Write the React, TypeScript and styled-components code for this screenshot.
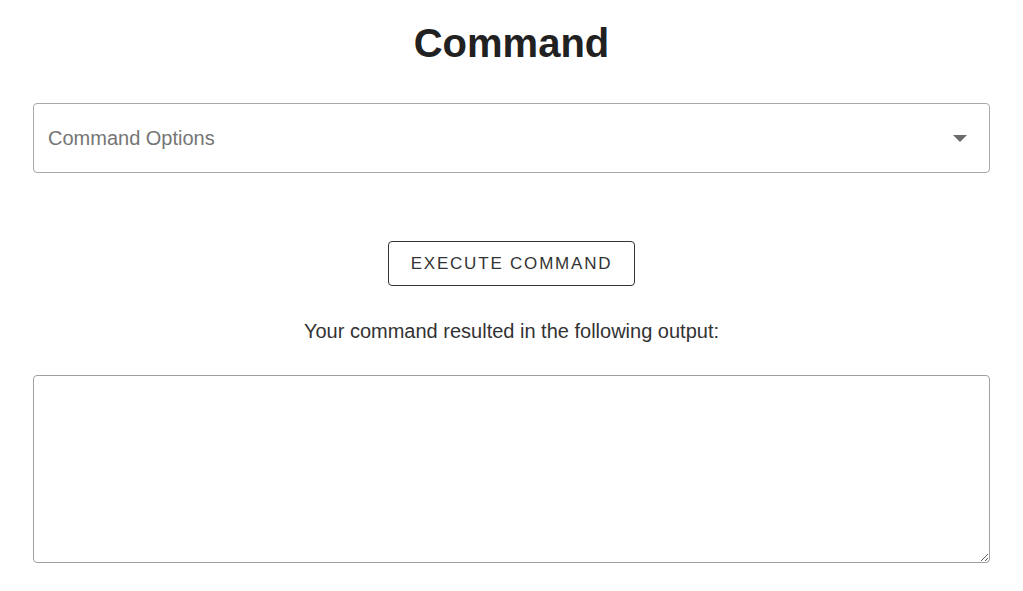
import React from "react";
import styled, { createGlobalStyle } from "styled-components";

const Global = createGlobalStyle`
  html, body { margin: 0; padding: 0; background: #fff; }
  body { font-family: "Liberation Sans", Arial, sans-serif; color: #222; }
`;

const Page = styled.main`
  display: flex;
  flex-direction: column;
  align-items: center;
  padding: 0 33px;
`;

const Title = styled.h1`
  margin: 20px 0 0;
  font-size: 40px;
  line-height: 46px;
  font-weight: 700;
  color: #212121;
`;

const SelectBox = styled.div`
  box-sizing: border-box;
  width: 100%;
  height: 70px;
  margin-top: 37px;
  border: 1px solid #a8a8a8;
  border-radius: 4px;
  display: flex;
  align-items: center;
  justify-content: space-between;
  padding: 0 22px 0 14px;
`;

const Placeholder = styled.span`
  font-size: 20px;
  color: #757575;
`;

const Caret = styled.svg`
  width: 14px;
  height: 7px;
  fill: #6b6b6b;
`;

const Button = styled.button`
  margin-top: 68px;
  box-sizing: border-box;
  width: 247px;
  height: 45px;
  background: #fff;
  border: 1px solid #333;
  border-radius: 4px;
  font-family: "Liberation Sans", Arial, sans-serif;
  font-size: 17px;
  letter-spacing: 1.8px;
  color: #333;
  text-transform: uppercase;
  cursor: pointer;
`;

const Output = styled.p`
  margin: 33px 0 0;
  font-size: 20px;
  line-height: 24px;
  color: #333;
`;

const TextArea = styled.textarea`
  box-sizing: border-box;
  width: 100%;
  height: 188px;
  margin-top: 32px;
  border: 1px solid #a0a0a0;
  border-radius: 4px;
  display: block;
  outline: none;
  resize: both;
`;

export default function App() {
  return (
    <>
      <Global />
      <Page>
        <Title>Command</Title>
        <SelectBox>
          <Placeholder>Command Options</Placeholder>
          <Caret viewBox="0 0 14 7">
            <polygon points="0,0 14,0 7,7" />
          </Caret>
        </SelectBox>
        <Button>Execute Command</Button>
        <Output>Your command resulted in the following output:</Output>
        <TextArea />
      </Page>
    </>
  );
}
